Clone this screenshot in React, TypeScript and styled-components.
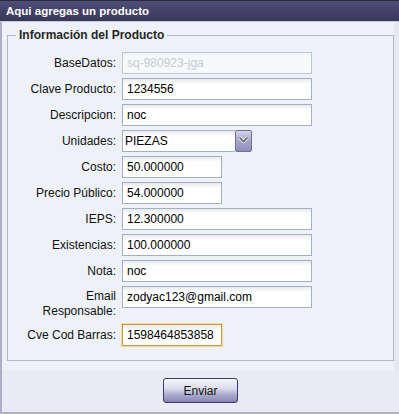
import React from "react";
import styled, { createGlobalStyle } from "styled-components";

const Global = createGlobalStyle`
  html, body { margin: 0; padding: 0; background: #ffffff; }
  body { font-family: "Liberation Sans", Arial, sans-serif; font-size: 12px; color: #111; }
  * { box-sizing: border-box; }
`;

const Window = styled.div`
  width: 399px;
  height: 414px;
  display: flex;
  flex-direction: column;
  background: #e8ebf5;
`;

const Header = styled.div`
  height: 22px;
  flex: none;
  display: flex;
  align-items: center;
  padding-left: 6px;
  color: #ffffff;
  font-weight: bold;
  font-size: 11.5px;
  background: linear-gradient(#4e4d75, #3a3859);
  border-top: 1px solid #2a2943;
  border-bottom: 1px solid #c3cfe0;
`;

const Middle = styled.div`
  display: flex;
  flex: none;
`;

const Main = styled.div`
  width: 394px;
  background: #eef2f8;
  border-left: 2px solid #aeaecb;
  padding: 6px 0 9px 5px;
`;

const Strip = styled.div`
  flex: 1;
  background: #e5e7f2;
`;

const Fieldset = styled.fieldset`
  margin: 0;
  border: 1px solid #b1b9c7;
  padding: 10px 0 14px 0;
  min-width: 0;
`;

const Legend = styled.legend`
  margin-left: 8px;
  padding: 0 3px;
  font-weight: bold;
  font-size: 12px;
  line-height: 14px;
  color: #262626;
`;

const Rows = styled.div`
  display: flex;
  flex-direction: column;
  gap: 4px;
`;

const Row = styled.div<{ $tall?: boolean }>`
  display: flex;
  align-items: ${(p) => (p.$tall ? "flex-start" : "center")};
  gap: 6px;
`;

const Label = styled.label<{ $tall?: boolean }>`
  width: 108px;
  flex: none;
  text-align: right;
  color: #111;
  font-size: 12px;
  line-height: ${(p) => (p.$tall ? "15px" : "22px")};
  padding: ${(p) => (p.$tall ? "3px 0 1px" : "0")};
`;

const Input = styled.input<{ $w: number; $focus?: boolean }>`
  width: ${(p) => p.$w}px;
  height: 22px;
  margin: 0;
  padding: 0 4px;
  font-family: "Liberation Sans", Arial, sans-serif;
  font-size: 12px;
  color: #000;
  border: 1px solid ${(p) => (p.$focus ? "#c9993a" : "#a2b0c1")};
  box-shadow: ${(p) => (p.$focus ? "0 0 0 1px #f1d9a2" : "none")};
  background: linear-gradient(#e6eaee, #ffffff 5px);
  outline: none;
  &:disabled {
    color: #c2cad3;
    border-color: #bcc8d3;
    background: linear-gradient(#eef3f6, #f6fafb 5px);
  }
`;

const SelectWrap = styled.div`
  display: flex;
  width: 130px;
  height: 22px;
`;

const Select = styled.select`
  flex: 1;
  min-width: 0;
  height: 22px;
  margin: 0;
  padding: 0 2px;
  appearance: none;
  font-family: "Liberation Sans", Arial, sans-serif;
  font-size: 12px;
  color: #000;
  border: 1px solid #a2b0c1;
  border-right: none;
  background: linear-gradient(#e6eaee, #ffffff 5px);
  outline: none;
`;

const ArrowBox = styled.span`
  width: 17px;
  height: 22px;
  flex: none;
  display: flex;
  align-items: flex-start;
  justify-content: center;
  padding-top: 5px;
  border: 1px solid #6f6f98;
  border-radius: 2px;
  background: linear-gradient(#d3d3e6, #a9a9cc 45%, #8d8db9);
`;

const Footer = styled.div`
  flex: 1;
  display: flex;
  justify-content: center;
  align-items: flex-start;
  padding-top: 8px;
  background: #e8ebf5;
  border-left: 2px solid #aeaecb;
  border-bottom: 2px solid #b1b1c2;
`;

const Button = styled.button`
  width: 75px;
  height: 25px;
  margin: 0;
  padding: 0;
  font-family: "Liberation Sans", Arial, sans-serif;
  font-size: 12px;
  color: #111;
  border: 1px solid #3d3c6c;
  border-radius: 3px;
  background: linear-gradient(#f6f6fb, #dcdcec 40%, #a9a9cc 70%, #8585b3);
  cursor: pointer;
`;

type Field = { label: string; value: string; w: number; disabled?: boolean };

const fieldsTop: Field[] = [
  { label: "BaseDatos:", value: "sq-980923-jga", w: 190, disabled: true },
  { label: "Clave Producto:", value: "1234556", w: 190 },
  { label: "Descripcion:", value: "noc", w: 190 },
];

const fieldsMid: Field[] = [
  { label: "Costo:", value: "50.000000", w: 100 },
  { label: "Precio Público:", value: "54.000000", w: 100 },
  { label: "IEPS:", value: "12.300000", w: 190 },
  { label: "Existencias:", value: "100.000000", w: 190 },
  { label: "Nota:", value: "noc", w: 190 },
];

const FieldRow = ({ f }: { f: Field }) => (
  <Row>
    <Label>{f.label}</Label>
    <Input $w={f.w} defaultValue={f.value} disabled={f.disabled} />
  </Row>
);

export default function App() {
  return (
    <>
      <Global />
      <Window>
        <Header>Aqui agregas un producto</Header>
        <Middle>
          <Main>
            <Fieldset>
              <Legend>Información del Producto</Legend>
              <Rows>
                {fieldsTop.map((f) => (
                  <FieldRow key={f.label} f={f} />
                ))}
                <Row>
                  <Label>Unidades:</Label>
                  <SelectWrap>
                    <Select defaultValue="PIEZAS">
                      <option>PIEZAS</option>
                    </Select>
                    <ArrowBox>
                      <svg width="11" height="8" viewBox="0 0 11 8">
                        <polyline points="1.5,1.5 5.5,5.5 9.5,1.5" fill="none" stroke="#f4f4fa" strokeWidth="3.2" />
                        <polyline points="1.5,1.5 5.5,5.5 9.5,1.5" fill="none" stroke="#5b5b78" strokeWidth="1.6" />
                      </svg>
                    </ArrowBox>
                  </SelectWrap>
                </Row>
                {fieldsMid.map((f) => (
                  <FieldRow key={f.label} f={f} />
                ))}
                <Row $tall>
                  <Label $tall>
                    Email
                    <br />
                    Responsable:
                  </Label>
                  <Input $w={190} defaultValue="zodyac123@gmail.com" />
                </Row>
                <Row>
                  <Label>Cve Cod Barras:</Label>
                  <Input $w={100} $focus defaultValue="1598464853858" />
                </Row>
              </Rows>
            </Fieldset>
          </Main>
          <Strip />
        </Middle>
        <Footer>
          <Button>Enviar</Button>
        </Footer>
      </Window>
    </>
  );
}
